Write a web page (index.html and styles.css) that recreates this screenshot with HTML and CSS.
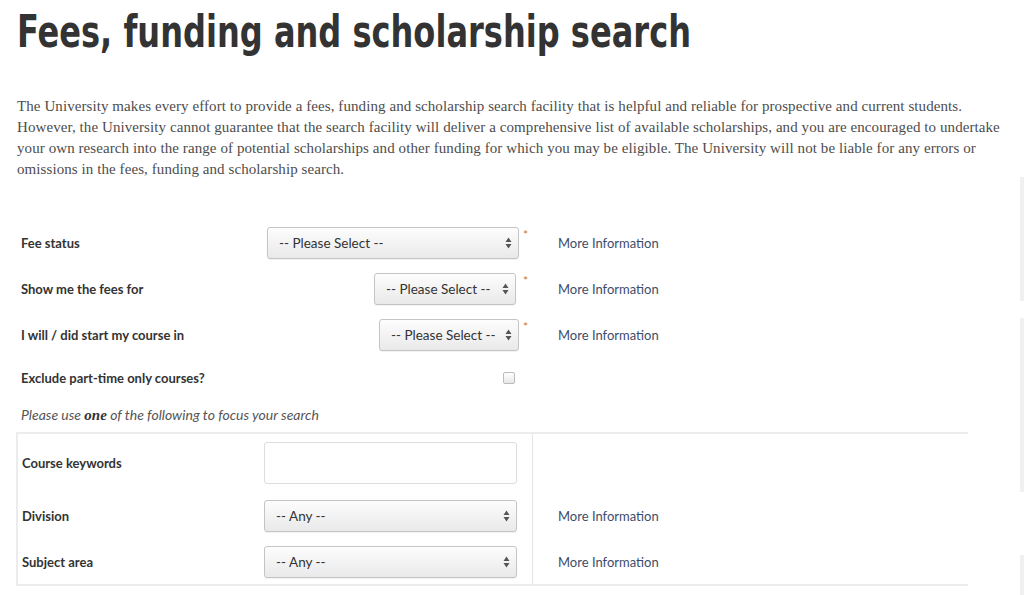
FILE: index.html
```html
<!DOCTYPE html>
<html lang="en">
<head>
  <meta charset="UTF-8">
  <title>Fees, funding and scholarship search</title>
  <meta name="viewport" content="width=device-width, initial-scale=1.0">
  <link rel="stylesheet" href="styles.css">
</head>

<body>

  <div class="page">
    <main class="content">
      <h1 class="title">Fees, funding and scholarship search</h1>

      <p class="intro">The University makes every effort to provide a fees, funding and scholarship search facility that is helpful and reliable for prospective and current students. However, the University cannot guarantee that the search facility will deliver a comprehensive list of available scholarships, and you are encouraged to undertake your own research into the range of potential scholarships and other funding for which you may be eligible. The University will not be liable for any errors or omissions in the fees, funding and scholarship search.</p>

      <form class="search">
        <!-- Required fields -->
        <div class="row">
          <label class="label">Fee status</label>
          <div class="select">
            <span>-- Please Select --</span>
            <svg class="arrows" width="7" height="12" viewBox="0 0 7 12"><path d="M3.5 0.5L6.5 5H0.5Z M0.5 7H6.5L3.5 11.5Z" fill="#555"/></svg>
          </div>
          <span class="req">*</span>
          <a class="more" href="#">More Information</a>
        </div>

        <div class="row">
          <label class="label">Show me the fees for</label>
          <div class="select select-fees">
            <span>-- Please Select --</span>
            <svg class="arrows" width="7" height="12" viewBox="0 0 7 12"><path d="M3.5 0.5L6.5 5H0.5Z M0.5 7H6.5L3.5 11.5Z" fill="#555"/></svg>
          </div>
          <span class="req">*</span>
          <a class="more" href="#">More Information</a>
        </div>

        <div class="row">
          <label class="label">I will / did start my course in</label>
          <div class="select select-start">
            <span>-- Please Select --</span>
            <svg class="arrows" width="7" height="12" viewBox="0 0 7 12"><path d="M3.5 0.5L6.5 5H0.5Z M0.5 7H6.5L3.5 11.5Z" fill="#555"/></svg>
          </div>
          <span class="req">*</span>
          <a class="more" href="#">More Information</a>
        </div>

        <div class="row row-check">
          <label class="label">Exclude part-time only courses?</label>
          <span class="checkbox"></span>
        </div>

        <p class="note">Please use <strong>one</strong> of the following to focus your search</p>

        <!-- Pick one of these -->
        <div class="box">
          <label class="label cell cell-first">Course keywords</label>
          <div class="cell cell-first"><span class="textbox"></span></div>
          <div class="cell cell-first info"></div>

          <label class="label cell">Division</label>
          <div class="cell">
            <div class="select select-full">
              <span>-- Any --</span>
              <svg class="arrows" width="7" height="12" viewBox="0 0 7 12"><path d="M3.5 0.5L6.5 5H0.5Z M0.5 7H6.5L3.5 11.5Z" fill="#555"/></svg>
            </div>
          </div>
          <div class="cell info"><a class="more" href="#">More Information</a></div>

          <label class="label cell">Subject area</label>
          <div class="cell">
            <div class="select select-full">
              <span>-- Any --</span>
              <svg class="arrows" width="7" height="12" viewBox="0 0 7 12"><path d="M3.5 0.5L6.5 5H0.5Z M0.5 7H6.5L3.5 11.5Z" fill="#555"/></svg>
            </div>
          </div>
          <div class="cell info"><a class="more" href="#">More Information</a></div>
        </div>
      </form>
    </main>

    <aside class="rail">
      <span class="rail-bar rail-1"></span>
      <span class="rail-bar rail-2"></span>
      <span class="rail-bar rail-3"></span>
    </aside>
  </div>

</body>
</html>
```

FILE: styles.css
```css
html, body {
  margin: 0;
  padding: 0;
  background: #fff;
  color: #333;
  font-family: Lato, 'Open Sans', sans-serif;
  overflow: hidden;
}

.page {
  display: flex;
  height: 595px;
}

.content {
  flex: 1;
  padding-left: 17px;
}

.title {
  margin: 6px 0 0;
  font-family: 'DejaVu Sans Condensed', 'DejaVu Sans', sans-serif;
  font-size: 44px;
  line-height: 52px;
  font-weight: bold;
  color: #333;
  white-space: nowrap;
  transform: scaleX(0.81);
  transform-origin: left center;
}

.intro {
  margin: 38px 0 0;
  width: 990px;
  font-family: 'Liberation Serif', serif;
  font-size: 15px;
  letter-spacing: 0.08px;
  line-height: 21px;
  color: #4d4d4d;
}

.search {
  margin-top: 40px;
}

.row {
  display: grid;
  grid-template-columns: 246px 253px 38px auto;
  align-items: center;
  height: 46px;
  padding-left: 4px;
}

.row .select {
  justify-self: start;
  width: 252px;
}

.row .select-fees {
  justify-self: end;
  width: 142px;
  margin-right: 4px;
}

.row .select-start {
  justify-self: end;
  width: 140px;
  margin-right: 1px;
}

.row-check {
  height: 40px;
}

.label {
  font-size: 13px;
  font-weight: bold;
  color: #333;
}

.select {
  display: flex;
  align-items: center;
  justify-content: space-between;
  box-sizing: border-box;
  height: 32px;
  padding: 0 6px 0 11px;
  border: 1px solid #c4c4c4;
  border-radius: 3px;
  background: linear-gradient(#fdfdfd, #e9e9e9);
  box-shadow: 0 1px 1px rgba(0, 0, 0, 0.06);
  font-size: 13.5px;
  color: #333;
}

.select-full {
  width: 253px;
}

.arrows {
  flex: none;
}

.req {
  align-self: start;
  margin-top: 9px;
  padding-left: 3px;
  font-size: 12px;
  line-height: 12px;
  color: #d2741f;
}

.more {
  font-size: 13px;
  color: #3c4d6b;
  text-decoration: none;
}

.checkbox {
  justify-self: end;
  margin-right: 5px;
  width: 10px;
  height: 10px;
  border: 1px solid #bbb;
  border-radius: 2px;
  background: linear-gradient(#fff, #e8e8e8);
}

.note {
  margin: 0;
  padding: 9px 0 9px 4px;
  font-size: 14px;
  line-height: 16px;
  font-style: italic;
  color: #555;
}

.note strong {
  font-family: 'Liberation Serif', serif;
  font-size: 15px;
  color: #333;
}

.box {
  display: grid;
  grid-template-columns: 246px 268px auto;
  width: 950px;
  margin-left: -1px;
  border: 2px solid #ececec;
  border-right: none;
}

.cell {
  display: flex;
  align-items: center;
  padding: 8px 0 6px;
}

.cell-first {
  padding-bottom: 8px;
}

.label.cell {
  padding-left: 4px;
}

.textbox {
  display: block;
  box-sizing: border-box;
  width: 253px;
  height: 42px;
  border: 1px solid #ddd;
  border-radius: 3px;
  background: #fff;
}

.info {
  border-left: 1px solid #e4e4e4;
  padding-left: 25px;
}

.rail {
  display: flex;
  flex-direction: column;
  width: 4px;
}

.rail-bar {
  display: block;
  background: #f0f0f0;
}

.rail-1 {
  margin-top: 177px;
  height: 124px;
}

.rail-2 {
  margin-top: 17px;
  height: 174px;
}

.rail-3 {
  margin-top: 63px;
  height: 40px;
}
```
